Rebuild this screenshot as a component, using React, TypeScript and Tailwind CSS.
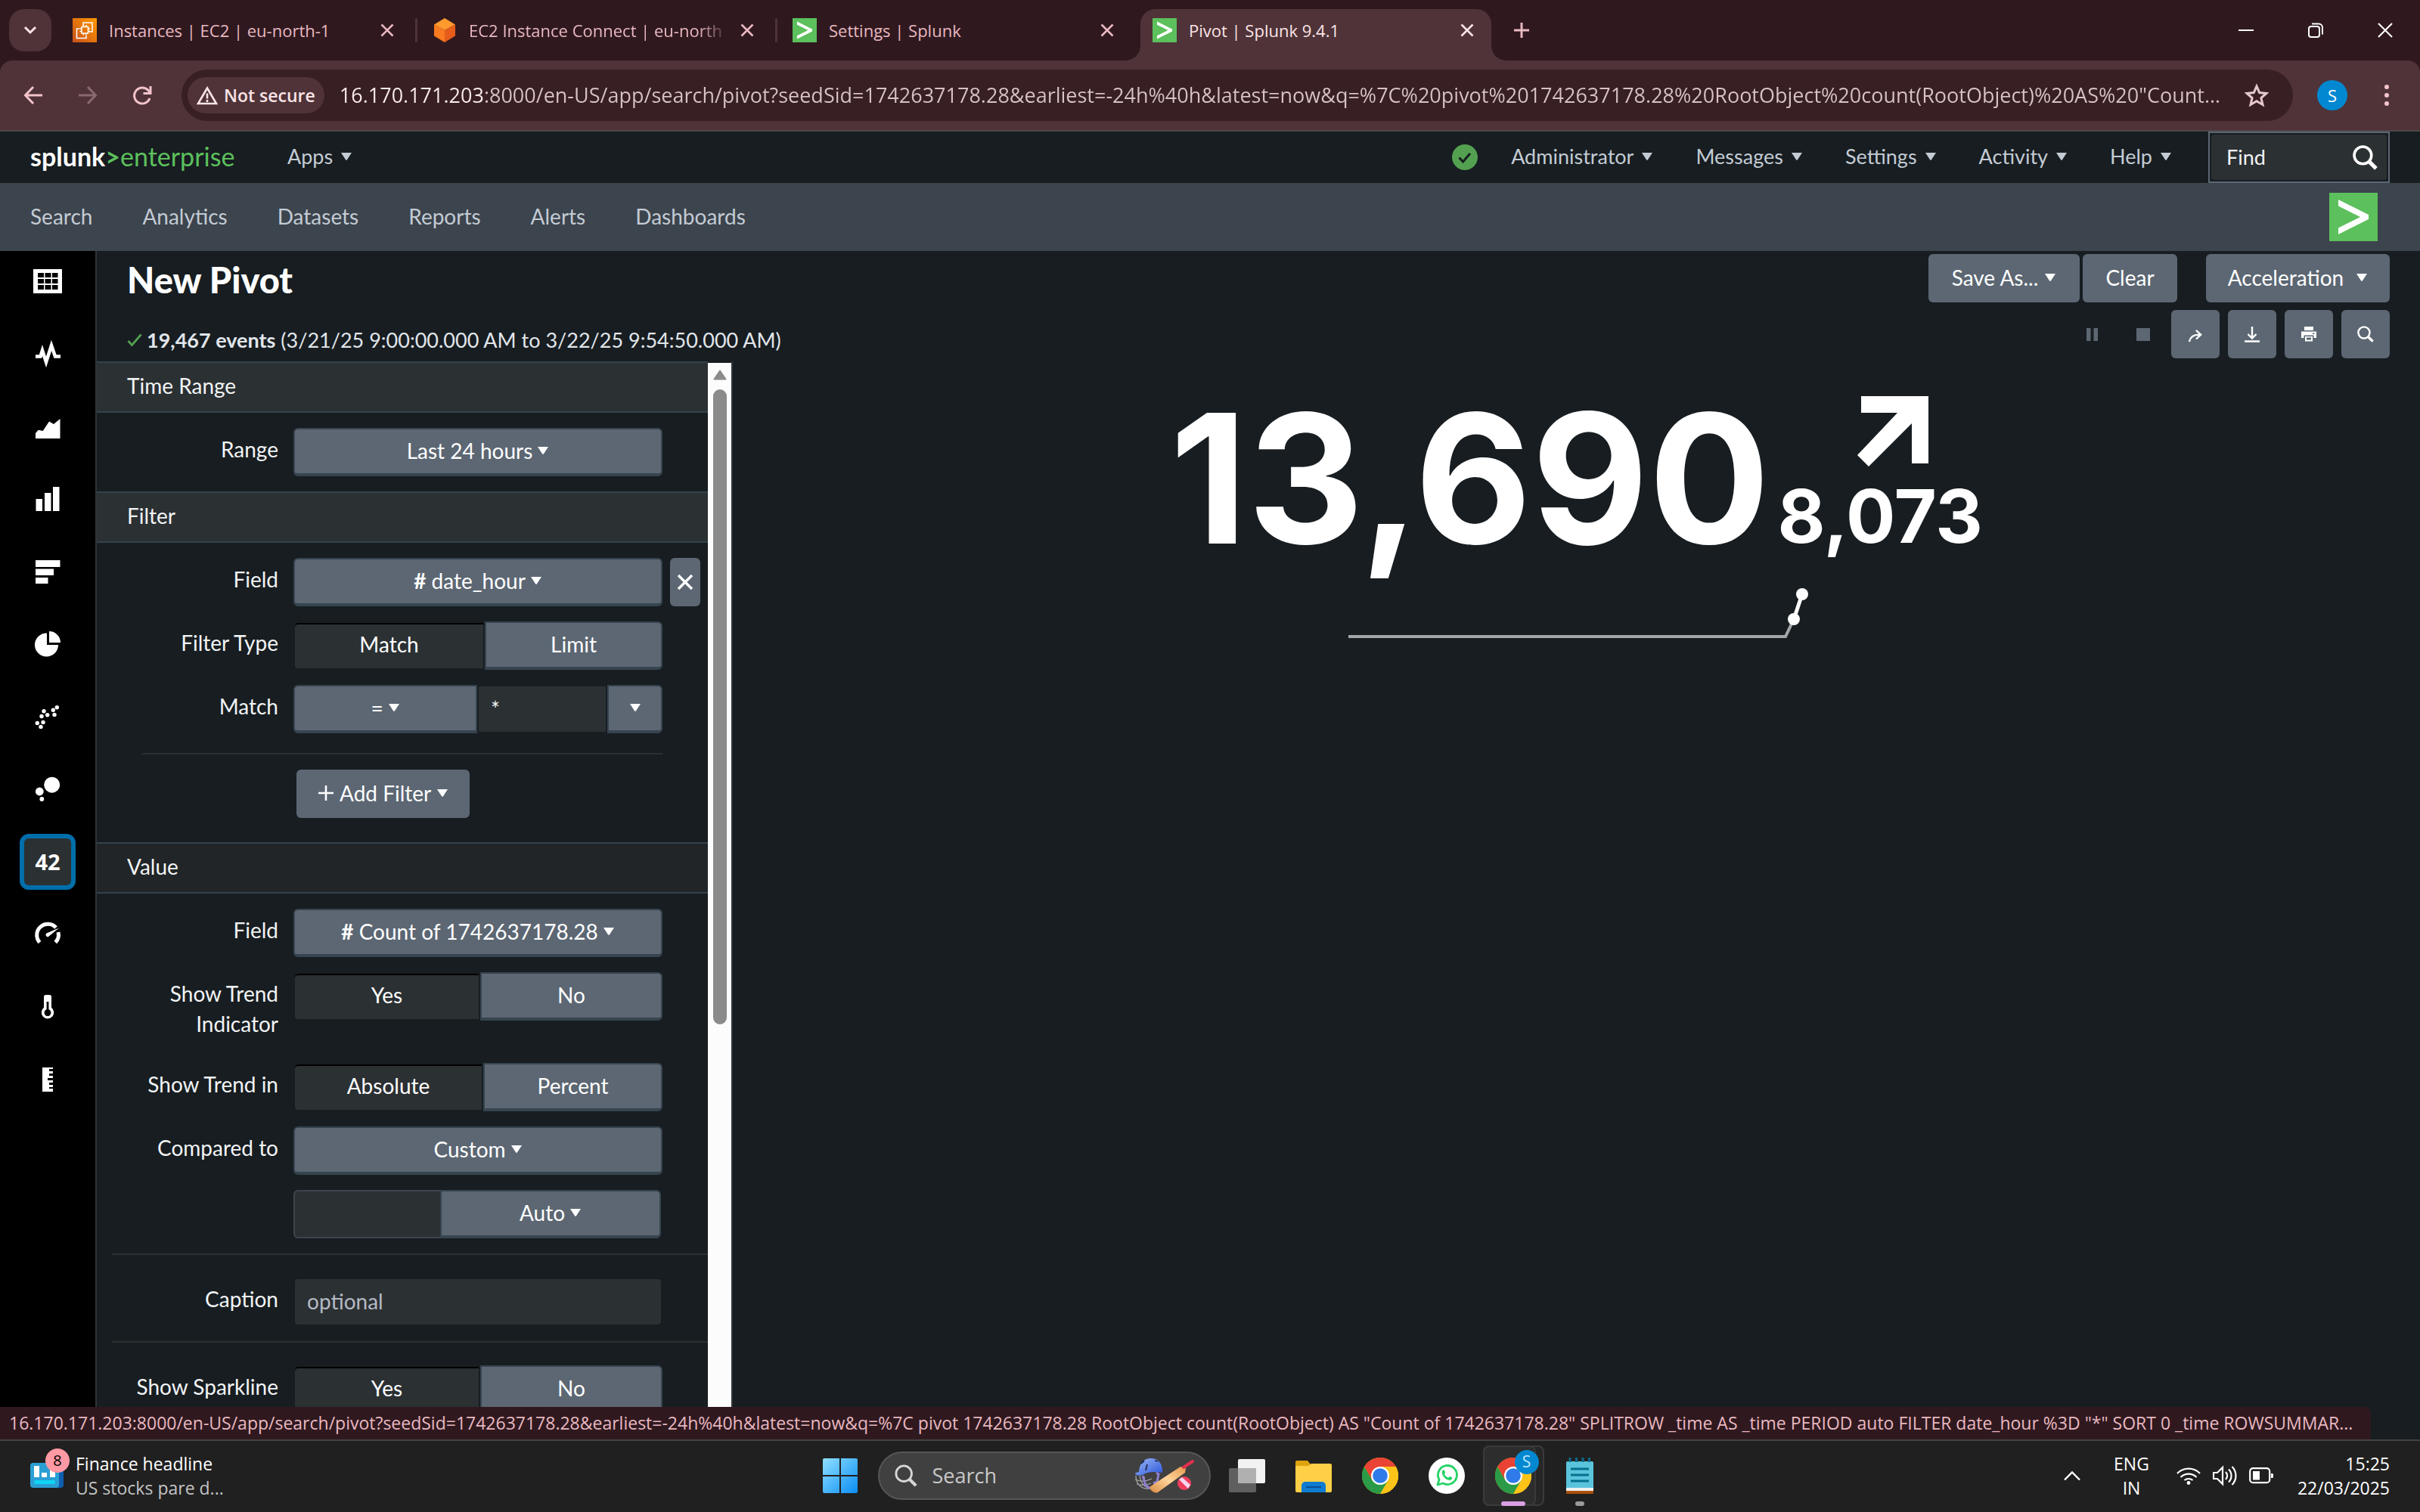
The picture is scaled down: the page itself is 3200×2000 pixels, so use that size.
import React, { ReactNode } from "react";

const ui = "font-['Lato',sans-serif]";

/* ---------- shared pieces ---------- */

function Caret({ className = "" }: { className?: string }) {
  return (
    <svg width="16" height="10" viewBox="0 0 16 10" className={`inline-block shrink-0 ${className}`} aria-hidden="true">
      <path d="M1 0h14L9 9.2a1.4 1.4 0 0 1-2 0z" fill="currentColor" />
    </svg>
  );
}

function Cross({ size = 20, stroke = 3 }: { size?: number; stroke?: number }) {
  return (
    <svg width={size} height={size} viewBox="0 0 20 20" aria-hidden="true">
      <path d="M2.5 2.5l15 15M17.5 2.5l-15 15" stroke="currentColor" strokeWidth={stroke} fill="none" />
    </svg>
  );
}

function SplunkMark({ className }: { className: string }) {
  return (
    <svg viewBox="0 0 64 64" className={className} aria-hidden="true">
      <rect width="64" height="64" fill="#5cc05c" />
      <path d="M12 9l40 20v6L12 55v-8.500l29-14.500L12 17.500z" fill="#fff" />
    </svg>
  );
}

function Magnifier({ size, stroke, className = "" }: { size: number; stroke: number; className?: string }) {
  return (
    <svg width={size} height={size} viewBox="0 0 32 32" className={className} aria-hidden="true">
      <circle cx="13" cy="13" r="11" fill="none" stroke="currentColor" strokeWidth={stroke} />
      <path d="M21 21l9 9" stroke="currentColor" strokeWidth={stroke + 1.5} />
    </svg>
  );
}

/* ---------- browser chrome ---------- */

function AwsIcon() {
  return (
    <svg width="32" height="32" viewBox="0 0 32 32" className="shrink-0" aria-hidden="true">
      <defs>
        <linearGradient id="aws" x1="0" y1="1" x2="1" y2="0">
          <stop offset="0" stopColor="#c8511b" />
          <stop offset="1" stopColor="#ff9900" />
        </linearGradient>
      </defs>
      <rect width="32" height="32" fill="url(#aws)" />
      <g fill="none" stroke="#fff" strokeWidth="1.500">
        <path d="M14 10V6h12v12h-4" />
        <path d="M9 14H5.500v12.500H18V23" />
        <rect x="12" y="11.500" width="8.500" height="8.500" />
        <path d="M14.500 9v2.500M18 9v2.500M14.500 20v2.500M18 20v2.500M9.500 14H12M9.500 17.500H12M20.500 14H23M20.500 17.500H23" />
      </g>
    </svg>
  );
}

function CubeIcon() {
  return (
    <svg width="32" height="32" viewBox="0 0 32 32" className="shrink-0" aria-hidden="true">
      <path d="M16 0l14 8.500L16 16 2 8.500z" fill="#ff9a2e" />
      <path d="M2 8.500L16 16v16L2 23.500z" fill="#fa7a20" />
      <path d="M30 8.500L16 16v16l14-8.500z" fill="#e65c1b" />
    </svg>
  );
}

function Tab({
  icon,
  title,
  active,
  divider,
  fade,
}: {
  icon: ReactNode;
  title: string;
  active?: boolean;
  divider?: boolean;
  fade?: boolean;
}) {
  return (
    <div
      className={`relative flex h-17 min-w-0 shrink items-center self-end pl-4 pb-3 ${
        active ? "w-[464px] rounded-t-[20px] bg-[#4f3338] pr-4 text-[#fbe4e6]" : "w-[476px] pr-7 text-[#e9b8c0]"
      }`}
    >
      {icon}
      <span
        className={`ml-4 min-w-0 flex-1 overflow-hidden whitespace-nowrap text-[22px] leading-8 ${
          fade ? "[mask-image:linear-gradient(90deg,#000_86%,transparent_98%)]" : ""
        }`}
      >
        {title}
      </span>
      <button aria-label={`Close ${title}`} className="flex size-8 shrink-0 items-center justify-center">
        <Cross size={20} stroke={2.6} />
      </button>
      {divider && <span className="absolute right-1 top-3 h-8 w-[3px] rounded bg-[#4f3338]" />}
      {active && (
        <>
          <span className="absolute -left-5 bottom-0 size-5 bg-[radial-gradient(circle_at_0_0,transparent_20px,#4f3338_20px)]" />
          <span className="absolute -right-5 bottom-0 size-5 bg-[radial-gradient(circle_at_100%_0,transparent_20px,#4f3338_20px)]" />
        </>
      )}
    </div>
  );
}

function TabStrip() {
  return (
    <div className="flex h-20 items-center bg-[#2f191f]">
      <button aria-label="Search tabs" className="ml-3 mr-3 flex size-14 items-center justify-center rounded-[20px] bg-[#4f3338] text-[#fbe4e6]">
        <svg width="20" height="20" viewBox="0 0 20 20" aria-hidden="true">
          <path d="M3 6l7 7 7-7" fill="none" stroke="currentColor" strokeWidth="3" />
        </svg>
      </button>
      <Tab icon={<AwsIcon />} title="Instances | EC2 | eu-north-1" divider />
      <Tab icon={<CubeIcon />} title="EC2 Instance Connect | eu-north" divider fade />
      <Tab icon={<SplunkMark className="size-8 shrink-0" />} title="Settings | Splunk" />
      <Tab icon={<SplunkMark className="size-8 shrink-0" />} title="Pivot | Splunk 9.4.1" active />
      <button aria-label="New tab" className="ml-6 flex size-8 items-center justify-center text-[#e9b8c0]">
        <svg width="22" height="22" viewBox="0 0 22 22" aria-hidden="true">
          <path d="M11 1v20M1 11h20" stroke="currentColor" strokeWidth="3" />
        </svg>
      </button>
      <div className="ml-auto flex text-white">
        <button aria-label="Minimise" className="flex h-20 w-23 items-center justify-center">
          <svg width="20" height="20" viewBox="0 0 20 20" aria-hidden="true">
            <path d="M0 10h20" stroke="currentColor" strokeWidth="2" />
          </svg>
        </button>
        <button aria-label="Restore" className="flex h-20 w-23 items-center justify-center">
          <svg width="20" height="20" viewBox="0 0 20 20" fill="none" stroke="currentColor" strokeWidth="2" aria-hidden="true">
            <rect x="1" y="5" width="14" height="14" rx="3" />
            <path d="M5 1.500h9a5 5 0 0 1 5 5v9" />
          </svg>
        </button>
        <button aria-label="Close window" className="flex h-20 w-23 items-center justify-center">
          <Cross size={24} stroke={1.7} />
        </button>
      </div>
    </div>
  );
}

function AddressBar() {
  return (
    <div className="bg-[#2f191f]">
      <div className="flex h-[94px] items-center rounded-t-[16px] border-b-2 border-[#4d4846] bg-[#4f3338] pr-8 text-[#f2c4ca]">
        <button aria-label="Back" className="ml-7 flex size-8 items-center justify-center">
          <svg width="26" height="26" viewBox="0 0 26 26" fill="none" stroke="currentColor" strokeWidth="3" aria-hidden="true">
            <path d="M25 13H3M13 2L2.500 13 13 24" />
          </svg>
        </button>
        <button aria-label="Forward" className="ml-10 flex size-8 items-center justify-center text-[#8b6a6f]">
          <svg width="26" height="26" viewBox="0 0 26 26" fill="none" stroke="currentColor" strokeWidth="3" aria-hidden="true">
            <path d="M1 13h22M13 2l10.500 11L13 24" />
          </svg>
        </button>
        <button aria-label="Reload" className="ml-10 flex size-8 items-center justify-center">
          <svg width="26" height="26" viewBox="0 0 26 26" fill="none" stroke="currentColor" strokeWidth="3" aria-hidden="true">
            <path d="M23 17A10.500 10.500 0 1 1 21 6.500l3 3.500" />
            <path d="M24 1v9.500h-9.500" />
          </svg>
        </button>
        <div className="ml-9 flex h-17 min-w-0 flex-1 items-center rounded-full bg-[#381f24] pl-2">
          <button className="flex h-12 shrink-0 items-center rounded-full bg-[#4f3338] px-3 text-[23px] font-semibold text-[#fbe4e6]">
            <svg width="28" height="25" viewBox="0 0 28 25" fill="none" stroke="currentColor" strokeWidth="2.600" className="mr-2" aria-hidden="true">
              <path d="M14 2.500L26 23H2z" />
              <path d="M14 9.500v7M14 18v3" />
            </svg>
            Not secure
          </button>
          <input
            aria-label="Address"
            readOnly
            className="ml-5 min-w-0 flex-1 truncate bg-[linear-gradient(90deg,#fdeeee_191px,#d8c2c5_191px)] bg-clip-text text-[27px] leading-9 text-transparent outline-none"
            value={
              '16.170.171.203:8000/en-US/app/search/pivot?seedSid=1742637178.28&earliest=-24h%40h&latest=now&q=%7C%20pivot%201742637178.28%20RootObject%20count(RootObject)%20AS%20"Count...'
            }
          />
          <button aria-label="Bookmark" className="mx-8 shrink-0 text-[#e5c9cc]">
            <svg width="32" height="32" viewBox="0 0 32 32" fill="none" stroke="currentColor" strokeWidth="3" aria-hidden="true">
              <path d="M16 4l3.700 8.500 9.200.9-7 6.100 2.100 9-8-4.800-8 4.800 2.100-9-7-6.100 9.200-.9z" />
            </svg>
          </button>
        </div>
        <button aria-label="Profile" className="ml-8 flex size-10 shrink-0 items-center justify-center rounded-full bg-[#0288d1] text-[22px] text-white">
          S
        </button>
        <button aria-label="Menu" className="ml-10 flex w-6 shrink-0 items-center justify-center">
          <svg width="6" height="28" viewBox="0 0 6 28" fill="currentColor" aria-hidden="true">
            <circle cx="3" cy="3" r="3" />
            <circle cx="3" cy="14" r="3" />
            <circle cx="3" cy="25" r="3" />
          </svg>
        </button>
      </div>
    </div>
  );
}

/* ---------- Splunk bars ---------- */

function SplunkHeader() {
  return (
    <header className={`flex h-17 items-center bg-[#171d21] pl-10 pr-10 text-[27px] text-[#c3cbd4] ${ui}`}>
      <a href="#home" aria-label="splunk>enterprise" className="flex w-[340px] items-center pb-[2px] text-[34px] leading-10">
        <span className="font-bold text-white">splunk</span>
        <span className="font-bold text-[#5cc05c]">&gt;</span>
        <span className="text-[#5cc05c]">enterprise</span>
      </a>
      <button className="flex items-center gap-[10px] pb-[2px]">
        Apps <Caret />
      </button>
      <div className="ml-auto flex items-center">
        <svg width="34" height="34" viewBox="0 0 34 34" aria-label="Health" className="mr-11">
          <circle cx="17" cy="17" r="17" fill="#53a051" />
          <path d="M9.500 17.500l5 5.500 9.500-11" fill="none" stroke="#171d21" strokeWidth="3" />
        </svg>
        <nav className="flex items-center gap-14 pb-[2px]">
          {["Administrator", "Messages", "Settings", "Activity", "Help"].map((t) => (
            <button key={t} className="flex items-center gap-[10px]">
              {t} <Caret />
            </button>
          ))}
        </nav>
        <label className="ml-12 flex h-17 w-[240px] items-center border-2 border-[#5c6773] p-[2px]">
          <span className="flex h-full w-full items-center rounded bg-[#2b3033] pl-5 pr-3">
            <input aria-label="Find" placeholder="Find" className="min-w-0 flex-1 bg-transparent outline-none placeholder:text-[#f2f4f5]" />
            <Magnifier size={33} stroke={3.5} className="text-white" />
          </span>
        </label>
      </div>
    </header>
  );
}

function NavBar() {
  return (
    <nav className={`flex h-[90px] items-center bg-[#3c444d] pl-10 pr-14 text-[28px] text-[#c3cbd4] ${ui}`}>
      <div className="flex gap-[66px] pb-[2px]">
        {["Search", "Analytics", "Datasets", "Reports", "Alerts", "Dashboards"].map((t) => (
          <a key={t} href={`#${t.toLowerCase()}`}>
            {t}
          </a>
        ))}
      </div>
      <a href="#app" aria-label="Search & Reporting" className="ml-auto">
        <SplunkMark className="size-16" />
      </a>
    </nav>
  );
}

/* ---------- visualisation picker ---------- */

const vizIcons: { name: string; art: ReactNode }[] = [
  {
    name: "Statistics table",
    art: (
      <>
        <path d="M1 4h38v32H1z" fill="#fff" />
        <path d="M7 9h8v6H7zM16.500 9h8v6h-8zM26 9h7.500v6H26zM7 17h8v6H7zM16.500 17h8v6h-8zM26 17h7.500v6H26zM7 25h8v6H7zM16.500 25h8v6h-8zM26 25h7.500v6H26z" fill="#000" />
      </>
    ),
  },
  { name: "Line chart", art: <path d="M4 23.500h6.500l2.500-8 5 15.500L25 9l5 14.500h7" fill="none" stroke="#fff" strokeWidth="4.500" /> },
  { name: "Area chart", art: <path d="M4 36v-7l3.700-4.300 6 1.300L22 13.500l6 3.500 8.500-7v26z" fill="#fff" /> },
  { name: "Column chart", art: <path d="M4.500 20H13v16H4.500zM16 12h8.500v24H16zM27 4h8.500v32H27z" fill="#fff" /> },
  { name: "Bar chart", art: <path d="M4 5h32.500v9H4zM4 16.500h24V25H4zM4 28h16.500v8H4z" fill="#fff" /> },
  {
    name: "Pie chart",
    art: <path d="M19 5.500V21h15A15.500 15.500 0 1 1 19 5.500zM22 3a15 15 0 0 1 15 15H22z" fill="#fff" />,
  },
  {
    name: "Scatter chart",
    art: (
      <g fill="#fff">
        <circle cx="6.300" cy="28.400" r="2.700" />
        <circle cx="11" cy="33.400" r="2.700" />
        <circle cx="14" cy="27.400" r="2.700" />
        <circle cx="12" cy="19.500" r="2.700" />
        <circle cx="15" cy="12.700" r="2.700" />
        <circle cx="19.700" cy="17.700" r="2.700" />
        <circle cx="27.300" cy="11.300" r="2.700" />
        <circle cx="29" cy="17.400" r="2.700" />
        <circle cx="32.300" cy="7.700" r="2.700" />
      </g>
    ),
  },
  {
    name: "Bubble chart",
    art: (
      <g fill="#fff">
        <circle cx="25.700" cy="14.200" r="10.500" />
        <circle cx="9.300" cy="23" r="5.400" />
        <circle cx="12.300" cy="33" r="2.900" />
      </g>
    ),
  },
  { name: "Single value", art: null },
  {
    name: "Radial gauge",
    art: (
      <>
        <path d="M9.500 30.500A14.500 14.500 0 1 1 31 11M34 17a14.500 14.500 0 0 1-3.700 13.500" fill="none" stroke="#fff" strokeWidth="5" />
        <path d="M18.500 18.500L35 11.500 21 23a2.600 2.600 0 0 1-2.500-4.500z" fill="#fff" />
      </>
    ),
  },
  {
    name: "Filler gauge",
    art: (
      <>
        <path d="M15 6.500A2.500 2.500 0 0 1 17.500 4h5A2.500 2.500 0 0 1 25 6.500v14.300a8.200 8.200 0 1 1-10 0z" fill="#fff" />
        <path d="M18.600 13h2.800v10.300a4.500 4.500 0 1 1-2.800 0z" fill="#000" />
      </>
    ),
  },
  {
    name: "Marker gauge",
    art: <path d="M13 4h14v2h-5v3h5v3h-5v3h5v3h-7v3h7v3h-5v3h5v3h-5v2h5v4H13z" fill="#fff" />,
  },
];

function VizPicker() {
  return (
    <aside className="w-32 shrink-0 border-r-2 border-[#2e343a] bg-black">
      <div className="flex flex-col items-center gap-[22px] pt-[3px]">
        {vizIcons.map((v) => (
          <button
            key={v.name}
            aria-label={v.name}
            aria-pressed={v.art === null}
            className={`flex size-[74px] items-center justify-center rounded-[12px] ${
              v.art === null ? "border-[6px] border-[#006eaa] bg-[#2b3033] text-[29px] font-bold text-white font-['Open_Sans',sans-serif]" : ""
            }`}
          >
            {v.art === null ? (
              "42"
            ) : (
              <svg width="40" height="40" viewBox="0 0 40 40" aria-hidden="true">
                {v.art}
              </svg>
            )}
          </button>
        ))}
      </div>
    </aside>
  );
}

/* ---------- settings form ---------- */

function Section({ title, open }: { title: string; open?: boolean }) {
  return (
    <h2 className={`flex h-17 items-center border-y-2 border-[#33424d] pl-10 pb-1 ${open ? "bg-[#212527]" : "bg-[#2b3033]"}`}>{title}</h2>
  );
}

function Row({ label, children, after }: { label: string; children: ReactNode; after?: ReactNode }) {
  return (
    <div className="mb-5 flex items-start">
      <span className="w-[240px] shrink-0 pt-2 pb-3 pl-10 text-right leading-10">{label}</span>
      <div role="group" aria-label={label} className="ml-5 flex h-16 w-[488px] shrink-0">
        {children}
      </div>
      {after}
    </div>
  );
}

const raised = "border-2 border-b-4 border-[#36444f] bg-[#5c6773] pb-[2px] text-white";

function Drop({ children, className }: { children?: ReactNode; className: string }) {
  return (
    <button className={`flex items-center justify-center gap-[6px] ${raised} ${className}`}>
      {children}
      <Caret />
    </button>
  );
}

function Segments({ on, off, split }: { on: string; off: string; split: string }) {
  return (
    <>
      <button
        aria-pressed="true"
        className={`${split} flex shrink-0 items-center justify-center rounded-l-[6px] border-2 border-[#171d21] bg-[#2b3033] pb-1 text-white shadow-[inset_0_2px_0_#000]`}
      >
        {on}
      </button>
      <button aria-pressed="false" className={`flex flex-1 items-center justify-center rounded-r-[6px] ${raised}`}>
        {off}
      </button>
    </>
  );
}

function SettingsForm() {
  return (
    <div className={`min-w-0 flex-1 overflow-hidden text-[28px] text-[#f2f4f5] ${ui}`}>
      <Section title="Time Range" />
      <div className="pt-5">
        <Row label="Range">
          <Drop className="w-full rounded-[6px]">Last 24 hours</Drop>
        </Row>
      </div>
      <Section title="Filter" />
      <div className="pt-5 pb-8">
        <Row
          label="Field"
          after={
            <button aria-label="Remove filter" className="ml-[10px] flex h-16 w-10 items-center justify-center rounded-[6px] bg-[#5c6773] text-white">
              <Cross size={24} stroke={2.8} />
            </button>
          }
        >
          <Drop className="w-full rounded-[6px]">
            <span>
              <b>#</b> date_hour
            </span>
          </Drop>
        </Row>
        <Row label="Filter Type">
          <Segments on="Match" off="Limit" split="w-[253px]" />
        </Row>
        <Row label="Match">
          <Drop className="w-[243px] rounded-l-[6px]">=</Drop>
          <input aria-label="Match value" defaultValue="*" className="min-w-0 flex-1 border-2 border-[#171d21] bg-[#2b3033] px-4 outline-none" />
          <Drop className="w-[73px] rounded-r-[6px]" />
        </Row>
        <hr className="mb-5 mt-[26px] ml-[60px] w-[688px] border-t-2 border-[#2b3033]" />
        <button className="ml-[264px] flex h-16 items-center gap-[7px] rounded-[6px] bg-[#5c6773] px-7 pb-[2px] text-white">
          <svg width="22" height="22" viewBox="0 0 22 22" aria-hidden="true">
            <path d="M11 1v20M1 11h20" stroke="currentColor" strokeWidth="2.600" />
          </svg>
          Add Filter <Caret />
        </button>
      </div>
      <Section title="Value" open />
      <div className="pt-5">
        <Row label="Field">
          <Drop className="w-full rounded-[6px]">
            <span>
              <b>#</b> Count of 1742637178.28
            </span>
          </Drop>
        </Row>
        <Row label="Show Trend Indicator">
          <Segments on="Yes" off="No" split="w-[247px]" />
        </Row>
        <Row label="Show Trend in">
          <Segments on="Absolute" off="Percent" split="w-[251px]" />
        </Row>
        <Row label="Compared to">
          <Drop className="w-full rounded-[6px]">Custom</Drop>
        </Row>
        <Row label="">
          <input
            aria-label="Compared to amount"
            className="w-[194px] rounded-l-[6px] border-2 border-r-0 border-[#3c444d] bg-[#2b3033] px-4 outline-none"
          />
          <Drop className="w-[292px] rounded-r-[6px]">Auto</Drop>
        </Row>
        <hr className="mb-[30px] ml-5 border-t-2 border-[#2b3033]" />
        <Row label="Caption">
          <input
            aria-label="Caption"
            placeholder="optional"
            className="w-full rounded-[6px] border-2 border-[#171d21] bg-[#2b3033] px-4 pb-[2px] outline-none placeholder:text-[#b5bac4]"
          />
        </Row>
        <hr className="mb-[30px] ml-5 border-t-2 border-[#2b3033]" />
        <Row label="Show Sparkline">
          <Segments on="Yes" off="No" split="w-[247px]" />
        </Row>
      </div>
    </div>
  );
}

function Scrollbar() {
  return (
    <div className="mt-[2px] flex w-[31px] shrink-0 flex-col items-center bg-[#fcfcfc]" aria-hidden="true">
      <svg width="18" height="14" viewBox="0 0 18 14" className="mt-[9px] shrink-0">
        <path d="M9 1.500l7.500 11h-15z" fill="#8b8b8b" stroke="#8b8b8b" strokeWidth="2" strokeLinejoin="round" />
      </svg>
      <div className="mt-3 h-[59%] w-[18px] rounded-full bg-[#8b8b8b]" />
    </div>
  );
}

/* ---------- pivot page ---------- */

function PivotHeader() {
  return (
    <div className="flex h-[146px] shrink-0 justify-between pl-10 pr-10">
      <div>
        <h1 className="mt-3 text-[47px] font-black leading-[52px] text-white">New Pivot</h1>
        <p className="mt-9 flex items-center text-[27px] leading-9 text-[#e1e6eb]">
          <svg width="20" height="18" viewBox="0 0 20 18" className="mr-[6px]" aria-hidden="true">
            <path d="M1.500 10l5 5.500L18.500 1.500" fill="none" stroke="#53a051" strokeWidth="2.800" />
          </svg>
          <span>
            <b>19,467 events</b> (3/21/25 9:00:00.000 AM to 3/22/25 9:54:50.000 AM)
          </span>
        </p>
      </div>
      <div className="flex flex-col items-end pt-1 text-[28px] text-white">
        <div className="flex">
          <button className="flex h-16 w-[200px] items-center justify-center gap-2 rounded-[6px] bg-[#5c6773] pb-[2px]">
            Save As... <Caret />
          </button>
          <button className="ml-1 h-16 w-[125px] rounded-[6px] bg-[#5c6773] pb-[2px]">Clear</button>
          <button className="ml-[38px] flex h-16 w-[243px] items-center justify-center gap-4 rounded-[6px] bg-[#5c6773] pb-[2px]">
            Acceleration <Caret />
          </button>
        </div>
        <div className="mt-[10px] flex items-center gap-[11px]">
          <button aria-label="Pause" disabled className="mr-9 flex h-16 w-5 items-center justify-center">
            <svg width="16" height="17" viewBox="0 0 16 17" aria-hidden="true">
              <path d="M0 0h5.500v17H0zM9.500 0H15v17H9.500z" fill="#5c6773" />
            </svg>
          </button>
          <button aria-label="Stop" disabled className="mr-4 flex h-16 w-5 items-center justify-center">
            <svg width="18" height="17" viewBox="0 0 18 17" aria-hidden="true">
              <path d="M0 0h18v17H0z" fill="#5c6773" />
            </svg>
          </button>
          <button aria-label="Share" className="flex size-16 items-center justify-center rounded-[6px] bg-[#5c6773]">
            <svg width="20" height="18" viewBox="0 0 22 20" fill="none" stroke="#fff" strokeWidth="2.600" className="mt-1" aria-hidden="true">
              <path d="M2 19C3.500 11.500 9 8 18 8.500M12 2l7 6.500-7 6.500" />
            </svg>
          </button>
          <button aria-label="Export" className="flex size-16 items-center justify-center rounded-[6px] bg-[#5c6773]">
            <svg width="22" height="22" viewBox="0 0 22 22" fill="none" stroke="#fff" strokeWidth="2.400" aria-hidden="true">
              <path d="M11 1v15M5.500 11l5.500 5.500 5.500-5.500M1 20.500h20" />
            </svg>
          </button>
          <button aria-label="Print" className="flex size-16 items-center justify-center rounded-[6px] bg-[#5c6773]">
            <svg width="22" height="22" viewBox="0 0 22 22" fill="#fff" aria-hidden="true">
              <path d="M5 1h12v5H5zM1 7.500h20v8.500h-3.500v-3.500h-13V16H1zM6 14h10v6.500H6z" />
              <path d="M8 15.500h6v3H8zM16 9.500h2.500v1.500H16z" fill="#5c6773" />
            </svg>
          </button>
          <button aria-label="Open in search" className="flex size-16 items-center justify-center rounded-[6px] bg-[#5c6773]">
            <Magnifier size={22} stroke={3.5} className="text-white" />
          </button>
        </div>
      </div>
    </div>
  );
}

function SingleValue() {
  return (
    <div className="flex min-w-0 flex-1 flex-col items-center pt-10 font-['Inter',sans-serif] text-white">
      <div className="flex items-start gap-[10px] font-bold">
        <span className="text-[238px] leading-[228px]">13,690</span>
        <span className="flex flex-col items-end">
          <svg width="94" height="94" viewBox="0 0 94 94" aria-label="Trending up" className="mr-[72px] mt-[6px]">
            <path d="M5 0h89v89H72V36L15 93 0 78 53 22H5z" fill="#fff" />
          </svg>
          <span className="mt-[10px] text-[97px] leading-[110px]">8,073</span>
        </span>
      </div>
      <svg width="612" height="72" viewBox="0 0 612 72" aria-label="Sparkline" className="mt-8">
        <path d="M4 64H582L593 41" fill="none" stroke="#a4a7a9" strokeWidth="4" />
        <path d="M593 41L604 8" stroke="#fff" strokeWidth="5" />
        <circle cx="593" cy="41" r="8" fill="#fff" />
        <circle cx="604" cy="8" r="8" fill="#fff" />
      </svg>
    </div>
  );
}

function StatusBubble() {
  return (
    <div className="absolute bottom-0 left-0 flex h-[43px] items-center rounded-tr-[8px] bg-[#2f191f] pl-3 pr-6 font-['Open_Sans',sans-serif] text-[23px] text-[#e9b8c0]">
      <span className="whitespace-nowrap">
        16.170.171.203:8000/en-US/app/search/pivot?seedSid=1742637178.28&amp;earliest=-24h%40h&amp;latest=now&amp;q=%7C pivot 1742637178.28
        RootObject count(RootObject) AS "Count of 1742637178.28" SPLITROW _time AS _time PERIOD auto FILTER date_hour %3D "*" SORT 0 _time
        ROWSUMMAR...
      </span>
    </div>
  );
}

/* ---------- Windows taskbar ---------- */

function ChromeLogo() {
  return (
    <svg width="48" height="48" viewBox="0 0 48 48" aria-hidden="true">
      <circle cx="24" cy="24" r="24" fill="#fbbc05" />
      <path d="M24 12h20.800A24 24 0 0 1 24 48l10.400-18z" fill="#fcc419" />
      <path d="M3.200 12A24 24 0 0 0 24 48l10.400-18L24 24 13.600 30z" fill="#2b9b47" />
      <path d="M3.200 12l10.400 18L24 12h20.800A24 24 0 0 0 3.200 12z" fill="#ea4335" />
      <circle cx="24" cy="24" r="12" fill="#fff" />
      <circle cx="24" cy="24" r="9.800" fill="#2f7bea" />
    </svg>
  );
}

function CricketArt() {
  return (
    <svg width="80" height="48" viewBox="0 0 80 48" aria-hidden="true">
      <defs>
        <linearGradient id="helmet" x1="0" y1="0" x2="1" y2="1">
          <stop offset="0" stopColor="#9db8f5" />
          <stop offset="1" stopColor="#2a56dc" />
        </linearGradient>
        <linearGradient id="bat" x1="0" y1="1" x2="1" y2="0">
          <stop offset="0" stopColor="#d88a43" />
          <stop offset="0.500" stopColor="#ffd49a" />
          <stop offset="1" stopColor="#e59a50" />
        </linearGradient>
      </defs>
      <g fill="none" stroke="#a9a9a9" strokeWidth="1.200">
        <path d="M3 24c0 12 8 18 18 17M8 24c1 9 6 15 14 17M14 25c0 8 3 13 8 16M2 29c7 3 14 3 22-1M4 35c6 2 12 2 19-1" />
      </g>
      <path d="M12 24l4 13 6 4M30 20l3 2-2 10-5 2" stroke="#8f7fd0" strokeWidth="3" fill="none" />
      <path d="M7 19C8 6 15 0 24 1c9 .5 15 8 14 19-11-2-20-1-26 3-4 1-8 1-10-1 0-2 3-3 5-3z" fill="url(#helmet)" />
      <path d="M18 9l-2 8M14 4l-4 4M28 4l4 1" stroke="#1b2a4a" strokeWidth="1.800" />
      <path d="M21 39L62 12l7 2-1 6-36 26c-4 2-10-2-11-7z" fill="url(#bat)" />
      <path d="M66 13L78 5" stroke="#e0304e" strokeWidth="4" strokeLinecap="round" />
      <circle cx="67" cy="34" r="9" fill="#ef3d5c" />
      <path d="M60 29l4-3 11 10-3 5z" fill="#f5d5ef" />
    </svg>
  );
}

function TaskButton({ label, children, className = "w-[88px]" }: { label: string; children: ReactNode; className?: string }) {
  return (
    <button aria-label={label} className={`relative flex h-20 items-center justify-center ${className}`}>
      {children}
    </button>
  );
}

function Taskbar() {
  return (
    <footer className="grid h-24 shrink-0 grid-cols-[1fr_auto_1fr] items-center border-t-2 border-[#434343] bg-[#202020] pb-[2px] text-[24px]">
      <button className="flex items-center pl-10 text-left">
        <span className="relative">
          <svg width="44" height="44" viewBox="0 0 44 44" className="mt-1" aria-hidden="true">
            <rect x="4" y="3" width="40" height="33" rx="4" fill="#0f5fb0" />
            <rect x="0" y="3" width="38" height="33" rx="4" fill="#2b9fd4" />
            <path d="M5 7h7v15H5zM15 16h7v6h-7zM26 12h7v10h-7z" fill="#fff" />
            <rect x="5" y="26" width="28" height="5" rx="2" fill="#0fd5f5" />
          </svg>
          <span className="absolute -right-2 -top-3 flex size-8 items-center justify-center rounded-full bg-[#ff99a4] text-[20px] text-black">8</span>
        </span>
        <span className="ml-4 text-[23px] leading-8 text-white">
          Finance headline
          <br />
          <span className="text-[#c4c4c4]">US stocks pare d...</span>
        </span>
      </button>

      <div className="flex items-center pr-[6px]">
        <button aria-label="Start" className="mr-[27px]">
          <svg width="46" height="46" viewBox="0 0 46 46" aria-hidden="true">
            <defs>
              <linearGradient id="win" x1="0" y1="0" x2="1" y2="1">
                <stop offset="0" stopColor="#8fe0ff" />
                <stop offset="1" stopColor="#0a8df5" />
              </linearGradient>
            </defs>
            <path d="M2 0h20v22H0V2a2 2 0 0 1 2-2zM24 0h20a2 2 0 0 1 2 2v20H24zM0 24h22v22H2a2 2 0 0 1-2-2zM24 24h22v20a2 2 0 0 1-2 2H24z" fill="url(#win)" />
          </svg>
        </button>
        <label className="flex h-16 w-[440px] items-center rounded-full border-2 border-[#565656] bg-[#404040] pl-5 pr-5 text-[#d6d6d6]">
          <Magnifier size={30} stroke={3} />
          <input
            aria-label="Search"
            placeholder="Search"
            className="ml-5 min-w-0 flex-1 bg-transparent text-[27px] outline-none placeholder:text-[#c9c9c9]"
          />
          <CricketArt />
        </label>
        <TaskButton label="Task view" className="ml-1 w-[88px]">
          <svg width="48" height="44" viewBox="0 0 48 44" aria-hidden="true">
            <rect x="12" y="0" width="36" height="32" rx="2" fill="#f2f2f2" />
            <rect x="0" y="12" width="36" height="32" rx="2" fill="#5f5f5f" />
            <path d="M12 12h24v20H12z" fill="#b0b0b0" />
          </svg>
        </TaskButton>
        <TaskButton label="File Explorer">
          <svg width="48" height="44" viewBox="0 0 48 44" aria-hidden="true">
            <path d="M0 4a2 2 0 0 1 2-2h14l4 5H46a2 2 0 0 1 2 2v6H0z" fill="#dfa30e" />
            <path d="M0 9h17l4-3h25a2 2 0 0 1 2 2v34a2 2 0 0 1-2 2H2a2 2 0 0 1-2-2z" fill="#ffcf47" />
            <path d="M8 44V35a5 5 0 0 1 5-5h22a5 5 0 0 1 5 5v9z" fill="#0f7cd1" />
            <path d="M14 37h20" stroke="#0a4f94" strokeWidth="2" />
          </svg>
        </TaskButton>
        <TaskButton label="Chrome">
          <ChromeLogo />
        </TaskButton>
        <TaskButton label="WhatsApp">
          <svg width="48" height="48" viewBox="0 0 48 48" aria-hidden="true">
            <circle cx="24" cy="24" r="24" fill="#fff" />
            <path d="M12 36l2-7A12.500 12.500 0 1 1 19 34z" fill="none" stroke="#25d366" strokeWidth="2.800" strokeLinejoin="round" />
            <path d="M18.500 17c1.500-1.500 2.500-.5 3.500 2.500.3 1-1 1.800-1 2.500 1 2.200 2.700 3.700 5 4.500.8 0 1.500-1.800 2.500-1.500 3 1.300 3.500 2 2 3.800-5 4.700-15.500-5.800-12-11.800z" fill="#25d366" />
          </svg>
        </TaskButton>
        <TaskButton label="Chrome, profile S" className="w-[88px]">
          <span className="absolute left-1 right-[3px] inset-y-0 rounded-[8px] border-2 border-[#3a3a3a] bg-[#262626]" />
          <span className="absolute left-1 right-[14px] inset-y-0 rounded-[8px] border-2 border-[#3a3a3a] bg-[#2d2d2d]" />
          <span className="relative">
            <ChromeLogo />
          </span>
          <span className="absolute right-[10px] top-[6px] flex size-8 items-center justify-center rounded-full bg-[#0288d1] text-[21px] text-[#bfe6fb]">S</span>
          <span className="absolute bottom-0 h-[6px] w-8 rounded-full bg-[#d99fe4]" />
        </TaskButton>
        <TaskButton label="Notepad" className="ml-[26px] w-9">
          <svg width="36" height="48" viewBox="0 0 36 48" aria-hidden="true">
            <rect y="5" width="36" height="43" rx="2" fill="#5bc4dd" />
            <path d="M0 40h36v4H0z" fill="#f0f0f0" />
            <path d="M0 44h36v3a1 1 0 0 1-1 1H1a1 1 0 0 1-1-1z" fill="#a94f0c" />
            <path d="M5 0v6M13.500 0v6M22 0v6M30.500 0v6" stroke="#0a6a8c" strokeWidth="3" />
            <path d="M6 15h24M6 23h24M6 31h24" stroke="#056f8f" strokeWidth="3" />
          </svg>
          <span className="absolute bottom-0 h-[6px] w-3 rounded-full bg-[#9a9a9a]" />
        </TaskButton>
      </div>

      <div className="flex items-center justify-end pr-10 text-white">
        <button aria-label="Show hidden icons" className="mr-11">
          <svg width="22" height="14" viewBox="0 0 22 14" aria-hidden="true">
            <path d="M1 12.500L11 2.500l10 10" fill="none" stroke="currentColor" strokeWidth="2.400" />
          </svg>
        </button>
        <button className="mr-9 text-center text-[23px] leading-8">
          ENG
          <br />
          IN
        </button>
        <button aria-label="Network, sound, battery" className="mr-8 flex items-center gap-4">
          <svg width="32" height="24" viewBox="0 0 32 24" fill="none" stroke="currentColor" strokeWidth="2.200" aria-hidden="true">
            <path d="M1 9a21 21 0 0 1 30 0M5.500 14a15 15 0 0 1 21 0M10.500 18a8.500 8.500 0 0 1 11 0" />
            <circle cx="16" cy="21.500" r="2.400" fill="currentColor" stroke="none" />
          </svg>
          <svg width="32" height="28" viewBox="0 0 32 28" fill="none" stroke="currentColor" strokeWidth="2.200" aria-hidden="true">
            <path d="M1 10h5l7-7v22l-7-7H1zM17 9a7 7 0 0 1 0 10M21 5.500a12 12 0 0 1 0 17M25.500 2a17 17 0 0 1 0 24" />
          </svg>
          <svg width="32" height="22" viewBox="0 0 32 22" aria-hidden="true">
            <rect x="1.200" y="1.200" width="26" height="19" rx="4" fill="none" stroke="currentColor" strokeWidth="2.200" />
            <path d="M5 5h9v11.500H5zM29 8h1.500a1.500 1.500 0 0 1 1.500 1.500v3A1.500 1.500 0 0 1 30.500 14H29z" fill="currentColor" />
          </svg>
        </button>
        <button className="text-right text-[23px] leading-8">
          15:25
          <br />
          22/03/2025
        </button>
      </div>
    </footer>
  );
}

export default function App() {
  return (
    <div className="flex h-screen flex-col overflow-hidden bg-[#171d21] font-['Open_Sans',sans-serif]">
      <TabStrip />
      <AddressBar />
      <SplunkHeader />
      <NavBar />
      <div className="relative flex min-h-0 flex-1 overflow-hidden">
        <VizPicker />
        <main className={`flex min-w-0 flex-1 flex-col ${ui}`}>
          <PivotHeader />
          <div className="flex min-h-0 flex-1">
            <div className="flex w-[841px] shrink-0 border-r-2 border-[#2e343a]">
              <SettingsForm />
              <Scrollbar />
            </div>
            <SingleValue />
          </div>
        </main>
        <StatusBubble />
      </div>
      <Taskbar />
    </div>
  );
}
